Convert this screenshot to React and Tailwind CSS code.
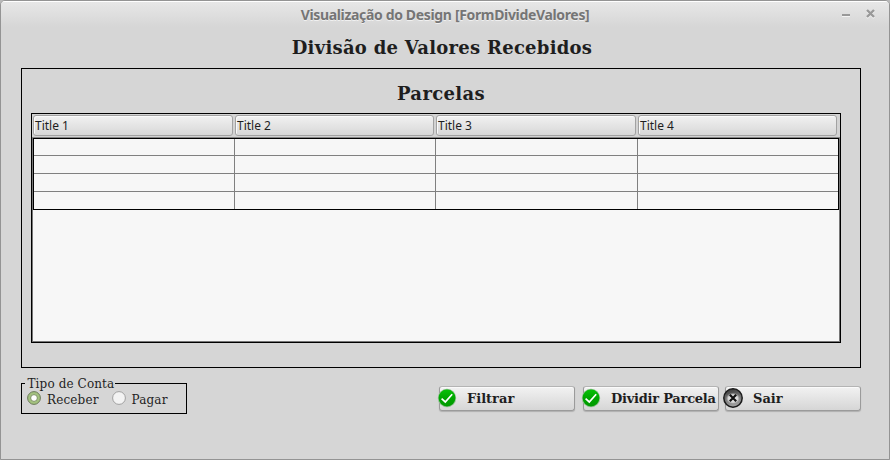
import React from 'react';

const columns = [
  { title: 'Title 1', head: 'w-[202px]', cell: 'w-[201px] border-r' },
  { title: 'Title 2', head: 'w-[201px]', cell: 'w-[201px] border-r' },
  { title: 'Title 3', head: 'w-[202px]', cell: 'w-[202px] border-r' },
  { title: 'Title 4', head: 'w-[201px]', cell: 'flex-1' },
];

const rows = ['h-[17px] border-b', 'h-[18px] border-b', 'h-[18px] border-b', 'h-[17px]'];

function CheckIcon() {
  return (
    <svg width="20" height="20" viewBox="0 0 20 20" className="block shrink-0">
      <defs>
        <linearGradient id="green" x1="0" y1="0" x2="0" y2="1">
          <stop offset="0" stopColor="#08c008" />
          <stop offset=".5" stopColor="#00a600" />
          <stop offset="1" stopColor="#009a00" />
        </linearGradient>
      </defs>
      <circle cx="10" cy="10" r="9.2" fill="#8fc08f" />
      <circle cx="10" cy="10" r="8.4" fill="url(#green)" />
      <path d="M4.6 10.6 8.3 14 15.2 6.2" fill="none" stroke="#fff" strokeWidth="1.7" />
    </svg>
  );
}

function CloseIcon() {
  return (
    <svg width="20" height="20" viewBox="0 0 20 20" className="block shrink-0">
      <defs>
        <linearGradient id="steel" x1="0" y1="0" x2="0.25" y2="1">
          <stop offset="0" stopColor="#303030" />
          <stop offset=".45" stopColor="#666" />
          <stop offset="1" stopColor="#a0a0a0" />
        </linearGradient>
        <radialGradient id="shine">
          <stop offset="0" stopColor="#fafafa" />
          <stop offset=".65" stopColor="#d4d4d4" />
          <stop offset="1" stopColor="#888" stopOpacity="0" />
        </radialGradient>
      </defs>
      <circle cx="10" cy="10" r="9.2" fill="url(#steel)" stroke="#1b1b1b" strokeWidth="1.5" />
      <ellipse cx="10" cy="10.5" rx="7.5" ry="6" fill="url(#shine)" />
      <path d="M6.8 6.8 13.2 13.2M13.2 6.8 6.8 13.2" fill="none" stroke="#111" strokeWidth="2.2" />
    </svg>
  );
}

function Button({ label, icon, spacing }) {
  return (
    <button
      className={`flex h-[25px] w-[136px] items-center rounded-[3px] border border-[#9b9b9b] border-t-[#b4b4b4] bg-linear-to-b from-[#f2f2f2] to-[#d6d6d6] text-left font-['DejaVu_Serif',serif] text-[13px] font-bold text-[#1e1e1e] shadow-[0_1px_1px_#b0b0b0,inset_0_1px_0_#fafafa] ${spacing}`}
    >
      <span className="-ml-[3px] mr-[10px] pb-[2px]">{icon}</span>
      <span className="whitespace-nowrap">{label}</span>
    </button>
  );
}

function Radio({ checked, label }) {
  return (
    <label className="flex items-start gap-[6px]">
      <svg width="14" height="14" viewBox="0 0 14 14" className="block shrink-0">
        <circle cx="7" cy="7" r="6.4" fill={checked ? '#a3c27e' : '#f3f3f3'} stroke={checked ? '#6d7a5c' : '#a0a0a0'} />
        {checked && <circle cx="7" cy="7" r="3.4" fill="#fff" stroke="#7c9162" />}
      </svg>
      <span className="pt-[2px]">{label}</span>
    </label>
  );
}

export default function App() {
  return (
    <div className="h-[460px] w-[890px] bg-[#b9b9b9]">
      <div className="flex h-[460px] flex-col overflow-hidden rounded-t-[5px] border border-[#949494] bg-[#d6d6d6] text-[#1e1e1e]">
        <header className="flex h-[26px] shrink-0 items-center border-t border-white bg-linear-to-b from-[#e7e7e7] to-[#d6d6d6]">
          <div className="w-[50px]" />
          <div className="flex-1 pt-px text-center font-['Noto_Sans',sans-serif] text-[14px] leading-[18px] font-bold tracking-[-0.34px] text-[#757575] [text-shadow:0_1px_0_#f0f0f0]">
            Visualização do Design [FormDivideValores]
          </div>
          <div className="flex w-[50px] items-center gap-[15px] pb-px pl-[3px]">
            <svg width="9" height="10" viewBox="0 0 9 10">
              <path d="M0 7h8" stroke="#f4f4f4" strokeWidth="2" />
              <path d="M0 6h8" stroke="#999" strokeWidth="2" />
            </svg>
            <svg width="10" height="10" viewBox="0 0 10 10">
              <path d="m1 2 7 7m0-7-7 7" stroke="#f4f4f4" strokeWidth="2.4" />
              <path d="m1 1 7 7m0-7-7 7" stroke="#999" strokeWidth="2.4" />
            </svg>
          </div>
        </header>
        <main className="px-5">
          <h1 className="h-[41px] w-[842px] pt-[10px] text-center font-['DejaVu_Serif',serif] text-[18px] leading-[22px] font-bold tracking-[0.26px]">
            Divisão de Valores Recebidos
          </h1>
          <section className="h-[300px] w-[840px] border border-black px-[9px]">
            <h2 className="h-[44px] pt-[14px] text-center font-['DejaVu_Serif',serif] text-[18px] leading-[22px] font-bold tracking-[0.35px]">
              Parcelas
            </h2>
            <div className="h-[230px] w-[810px] border border-black">
              <div className="flex h-full flex-col border-x border-b border-[#777] bg-[#f7f7f7]">
                <div className="-mx-px flex h-[24px] shrink-0 border-b border-[#858585] bg-[#d3d3d3] pl-px">
                  {columns.map((c) => (
                    <div key={c.title} className={`${c.head} pt-px pr-[2px]`}>
                      <div className="h-[21px] rounded-[3px] border border-[#a2a2a2] bg-linear-to-b from-[#f1f1f1] to-[#d8d8d8] pl-px font-['Noto_Sans',sans-serif] text-[12px] leading-[19px] shadow-[inset_1px_1px_0_#fafafa]">
                        {c.title}
                      </div>
                    </div>
                  ))}
                </div>
                <div className="h-[72px] w-[806px] border border-black">
                  {rows.map((r, i) => (
                    <div key={i} className={`flex border-[#808080] ${r}`}>
                      {columns.map((c) => (
                        <div key={c.title} className={`border-[#808080] ${c.cell}`} />
                      ))}
                    </div>
                  ))}
                </div>
              </div>
            </div>
          </section>
          <footer className="flex w-[840px] justify-between pt-[8px] font-['DejaVu_Serif',serif]">
            <fieldset className="h-[38px] w-[166px] border border-black pl-[5px] text-[12px] leading-[15px]">
              <legend className="-ml-[2px] h-[15px] bg-[#d6d6d6] pt-px pr-px pl-[2.5px] tracking-[0.12px]">Tipo de Conta</legend>
              <div className="flex gap-[13px] tracking-[0.15px]">
                <Radio checked label="Receber" />
                <Radio label="Pagar" />
              </div>
            </fieldset>
            <div className="flex pt-[10px]">
              <Button label="Filtrar" icon={<CheckIcon />} spacing="mr-2" />
              <Button label="Dividir Parcela" icon={<CheckIcon />} spacing="mr-1.5 tracking-[-0.24px]" />
              <Button label="Sair" icon={<CloseIcon />} spacing="" />
            </div>
          </footer>
        </main>
      </div>
    </div>
  );
}
